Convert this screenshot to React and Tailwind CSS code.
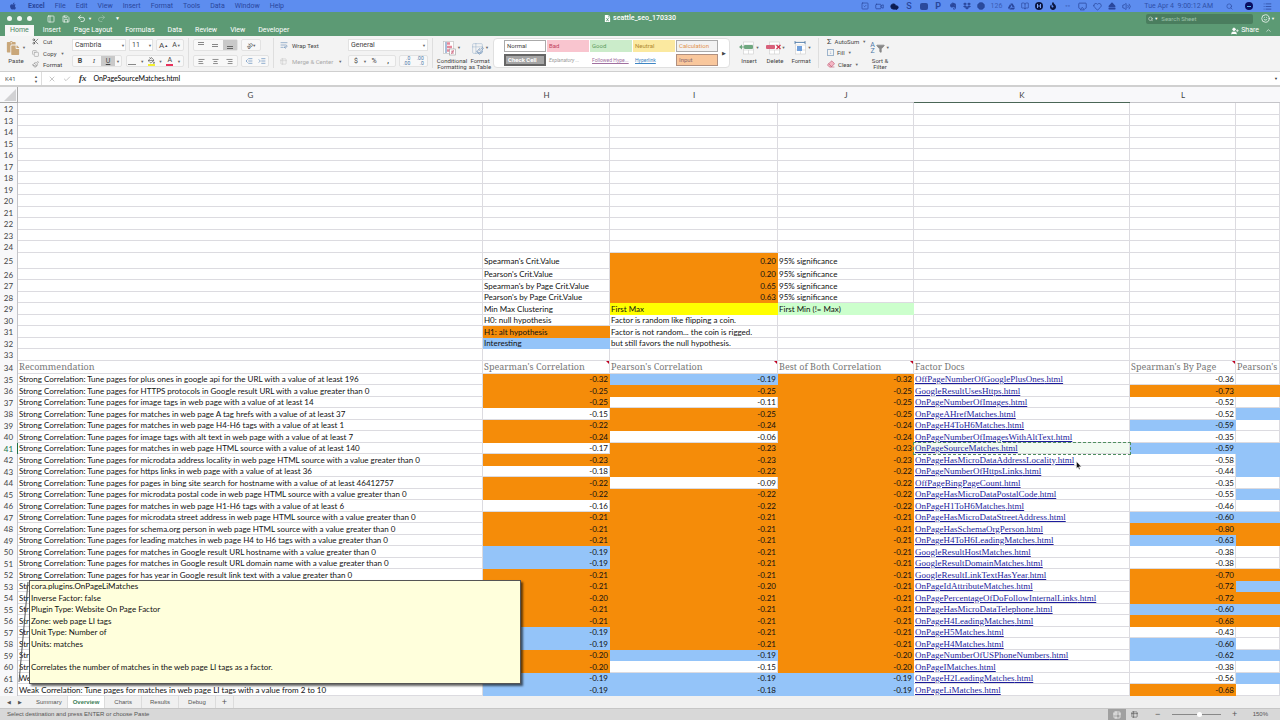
import React from "react";
import {
  AlignCenter,
  AlignLeft,
  AlignRight,
  Airplay,
  BookOpen,
  Check,
  ChevronUp,
  Cloud,
  Copy,
  Eraser,
  Filter,
  Heart,
  IndentDecrease,
  IndentIncrease,
  List,
  Octagon,
  PaintBucket,
  Paintbrush,
  PanelLeft,
  Redo2,
  Save,
  Scissors,
  Search,
  Smile,
  SquareCheck,
  Table2,
  TextWrap,
  Undo2,
  UserPlus,
  Video,
  Volume2,
  X,
} from "lucide-react";
import { FaApple, FaDropbox, FaEject, FaEvernote, FaFire, FaGoogleDrive, FaPaste, FaFileExcel } from "react-icons/fa";

const menus = ["File", "Edit", "View", "Insert", "Format", "Tools", "Data", "Window", "Help"];
const ribbonTabs = ["Insert", "Page Layout", "Formulas", "Data", "Review", "View", "Developer"];

const fills = {
  o: "bg-[#f58c09] border-[#f58c09]",
  b: "bg-[#94c4f9] border-[#94c4f9]",
  y: "bg-[#ffff00] border-[#ffff00]",
  g: "bg-[#ccffcc] border-[#ccffcc]",
  w: "border-[#dcdbe0]",
};

const S = "Strong Correlation: Tune pages for ";

// row number, recommendation, H, I, J, factor doc, L, fills for H I J L M
const rows = [
  [35, S + "plus ones in google api for the URL with a value of at least 196", "-0.32", "-0.19", "-0.32", "OffPageNumberOfGooglePlusOnes", "-0.36", "oboww"],
  [36, S + "HTTPS protocols in Google result URL with a value greater than 0", "-0.25", "-0.25", "-0.25", "GoogleResultUsesHttps", "-0.73", "ooooo"],
  [37, S + "image tags in web page with a value of at least 14", "-0.25", "-0.11", "-0.25", "OnPageNumberOfImages", "-0.52", "owoww"],
  [38, S + "matches in web page A tag hrefs with a value of at least 37", "-0.15", "-0.25", "-0.25", "OnPageAHrefMatches", "-0.52", "woowb"],
  [39, S + "matches in web page H4-H6 tags with a value of at least 1", "-0.22", "-0.24", "-0.24", "OnPageH4ToH6Matches", "-0.59", "ooobw"],
  [40, S + "image tags with alt text in web page with a value of at least 7", "-0.24", "-0.06", "-0.24", "OnPageNumberOfImagesWithAltText", "-0.35", "owoww"],
  [41, S + "matches in web page HTML source with a value of at least 140", "-0.17", "-0.23", "-0.23", "OnPageSourceMatches", "-0.59", "woobb"],
  [42, S + "microdata address locality in web page HTML source with a value greater than 0", "-0.23", "-0.23", "-0.23", "OnPageHasMicroDataAddressLocality", "-0.58", "ooowb"],
  [43, S + "https links in web page with a value of at least 36", "-0.18", "-0.22", "-0.22", "OnPageNumberOfHttpsLinks", "-0.44", "woowb"],
  [44, S + "pages in bing site search for hostname with a value of at least 46412757", "-0.22", "-0.09", "-0.22", "OffPageBingPageCount", "-0.35", "owoww"],
  [45, S + "microdata postal code in web page HTML source with a value greater than 0", "-0.22", "-0.22", "-0.22", "OnPageHasMicroDataPostalCode", "-0.55", "ooowb"],
  [46, S + "matches in web page H1-H6 tags with a value of at least 6", "-0.16", "-0.22", "-0.22", "OnPageH1ToH6Matches", "-0.46", "wooww"],
  [47, S + "microdata street address in web page HTML source with a value greater than 0", "-0.21", "-0.21", "-0.21", "OnPageHasMicroDataStreetAddress", "-0.60", "ooobb"],
  [48, S + "schema.org person in web page HTML source with a value greater than 0", "-0.21", "-0.21", "-0.21", "OnPageHasSchemaOrgPerson", "-0.80", "ooooo"],
  [49, S + "leading matches in web page H4 to H6 tags with a value greater than 0", "-0.21", "-0.21", "-0.21", "OnPageH4ToH6LeadingMatches", "-0.63", "ooobo"],
  [50, S + "matches in Google result URL hostname with a value greater than 0", "-0.19", "-0.21", "-0.21", "GoogleResultHostMatches", "-0.38", "booww"],
  [51, S + "matches in Google result URL domain name with a value greater than 0", "-0.19", "-0.21", "-0.21", "GoogleResultDomainMatches", "-0.38", "booww"],
  [52, S + "has year in Google result link text with a value greater than 0", "-0.21", "-0.21", "-0.21", "GoogleResultLinkTextHasYear", "-0.70", "ooooo"],
  [53, "Str", "-0.21", "-0.20", "-0.21", "OnPageIdAttributeMatches", "-0.72", "oooob"],
  [54, "Str", "-0.20", "-0.21", "-0.21", "OnPagePercentageOfDoFollowInternalLinks", "-0.72", "ooooo"],
  [55, "Str", "-0.21", "-0.21", "-0.21", "OnPageHasMicroDataTelephone", "-0.60", "ooobb"],
  [56, "Str", "-0.21", "-0.21", "-0.21", "OnPageH4LeadingMatches", "-0.68", "ooooo"],
  [57, "Str", "-0.19", "-0.21", "-0.21", "OnPageH5Matches", "-0.43", "booww"],
  [58, "Str", "-0.19", "-0.21", "-0.21", "OnPageH4Matches", "-0.60", "boobw"],
  [59, "Str", "-0.20", "-0.19", "-0.20", "OnPageNumberOfUSPhoneNumbers", "-0.62", "obobb"],
  [60, "Str", "-0.20", "-0.15", "-0.20", "OnPageIMatches", "-0.38", "owoww"],
  [61, "We", "-0.19", "-0.19", "-0.19", "OnPageH2LeadingMatches", "-0.56", "bbbwb"],
  [62, "Weak Correlation: Tune pages for matches in web page LI tags with a value from 2 to 10", "-0.19", "-0.18", "-0.19", "OnPageLiMatches", "-0.68", "bbbow"],
];

// row number, H, I, J, fills for H I J, whether I holds a number
const legend = [
  [25, "Spearman's Crit.Value", "0.20", "95% significance", "wow", true],
  [26, "Pearson's Crit.Value", "0.20", "95% significance", "wow", true],
  [27, "Spearman's by Page Crit.Value", "0.65", "95% significance", "wow", true],
  [28, "Pearson's by Page Crit.Value", "0.63", "95% significance", "wow", true],
  [29, "Min Max Clustering", "First Max", "First Min (!= Max)", "wyg"],
  [30, "H0: null hypothesis", "Factor is random like flipping a coin.", "", "www"],
  [31, "H1: alt hypothesis", "Factor is not random... the coin is rigged.", "", "oww"],
  [32, "Interesting", "but still favors the null hypothesis.", "", "bww"],
  [33, "", "", "", "www"],
];

const Cell = ({ children, fill = "w", right, className = "" }) => (
  <td
    className={`whitespace-nowrap border-r border-b p-0 ${fills[fill]} ${
      right ? "pr-px text-right" : "pl-px"
    } ${className}`}
  >
    {children}
  </td>
);

const RowHead = ({ n }) => (
  <th
    scope="row"
    className={`border-r p-0 text-center font-normal ${
      n === 41 ? "border-[#217346] text-[#217346]" : "border-[#c4c4c8] text-[#444]"
    } bg-[#f8f8fa]`}
  >
    {n}
  </th>
);

const HeadCell = ({ children, note }) => (
  <td className="relative whitespace-nowrap border-r border-b border-[#dcdbe0] p-0 pl-px font-['Noto_Serif','Liberation_Serif',serif] text-[9px] text-[#777]">
    {children}
    {note && (
      <svg className="absolute top-0 right-0" width="3" height="3" viewBox="0 0 3 3">
        <path d="M0 0h3v3z" fill="#c00020" />
      </svg>
    )}
  </td>
);

const Caret = () => <span className="text-[4px] text-[#666]">▼</span>;

const Divider = () => <div className="mx-1 w-px self-stretch bg-[#dedede]" />;

const SmallBtn = ({ children, on, label }) => (
  <button
    aria-label={label}
    className={`flex h-full flex-1 items-center justify-center ${on ? "bg-[#c9c9c9]" : ""}`}
  >
    {children}
  </button>
);

const BtnGroup = ({ children, className }) => (
  <div className={`flex h-3 items-center rounded-xs border border-[#e2e2e2] bg-[#f8f8f8] text-[7px] ${className}`}>{children}</div>
);

const BigBtn = ({ icon, children, className }) => (
  <button className={`flex flex-col items-center justify-start text-center leading-[6px] ${className}`}>
    <span className="flex h-5 shrink-0 items-center gap-px">
      {icon}
      <Caret />
    </span>
    <span>{children}</span>
  </button>
);

// sheet cells glyph, tinted per command
const CellsIcon = ({ tint, kind }) => (
  <svg width="16" height="14" viewBox="0 0 16 14" fill="none">
    <rect x="4.500" y="1" width="10" height="12" fill="#fff" stroke="#ccc" strokeWidth=".6" />
    <path d="M4.500 4h10M4.500 9h10M9.500 9v4" stroke="#ccc" strokeWidth=".6" />
    {kind === "format" ? (
      <>
        <path d="M4 1.500h10M4 0v3M14 0v3" stroke="#4b78a8" strokeWidth=".8" />
        <rect x="6" y="5" width="5" height="5" fill={tint} />
      </>
    ) : (
      <rect x={kind === "delete" ? "1" : "5"} y="4" width="9" height="4" rx="1" fill={tint} />
    )}
    {kind === "insert" && <path d="M0 6l3-2.500v2h3v1H3v2z" fill={tint} />}
    {kind === "delete" && <path d="M11.500 4l4 4M15.500 4l-4 4" stroke="#d22f4d" strokeWidth="1.200" />}
  </svg>
);

const CondIcon = () => (
  <svg width="13" height="15" viewBox="0 0 13 15" fill="none">
    <rect x=".5" y=".5" width="10" height="12" fill="#fff" stroke="#bbb" strokeWidth=".6" />
    <path d="M3 1v11" stroke="#8aa9cc" strokeWidth="1.500" />
    <path d="M4 2.500h3M4 6h5M4 9.500h3" stroke="#e58a9c" strokeWidth="2.500" />
    <rect x="6.500" y="8" width="6" height="6" fill="#fff" stroke="#999" strokeWidth=".6" />
    <path d="M8 10.200h3M8 12h3M10.500 9l-2 4" stroke="#c04060" strokeWidth=".6" />
  </svg>
);

const DecimalIcon = ({ top, bottom }) => (
  <span className="text-right text-[5px] leading-[5px] text-[#4b78a8]">
    {top}
    <br />
    {bottom}
  </span>
);

const MenuBar = () => (
  <header className="flex h-3 items-center justify-between bg-[#5d8def] px-2 text-[#2a479c]">
    <nav className="flex items-center gap-[10px] pl-px">
      <FaApple size={8} className="mr-px" />
      <button className="font-bold">Excel</button>
      {menus.map((m) => (
        <button key={m}>{m}</button>
      ))}
    </nav>
    <div className="flex items-center">
      <div className="flex items-center gap-[6px]">
        <SquareCheck size={8} />
        <Video size={9} />
        <Cloud size={9} className="fill-[#0c1c50] text-[#0c1c50]" />
        <b className="w-[9px] text-center text-[9px] font-medium">S</b>
        <span className="h-[7px] w-[8px] rounded-xs bg-[#2b4a9c]" />
        <b className="w-[9px] text-center text-[9px]">P</b>
        <FaEvernote size={8} />
        <FaDropbox size={8} />
        <Octagon size={8} className="fill-[#2b4a9c]" />
        <span className="text-[#3b5cb4]">126</span>
        <FaGoogleDrive size={7} />
        <BookOpen size={8} />
        <svg width="8" height="8" viewBox="0 0 8 8">
          <circle cx="4" cy="4" r="4" fill="#0b1640" />
          <path d="M2.500 2v4M5.500 2v4M2.500 4h3" stroke="#7da2f5" strokeWidth="1" />
        </svg>
        <FaFire size={8} className="text-[#0b1640]" />
        <span className="w-[9px] text-center">◦◦</span>
        <Airplay size={9} />
        <Heart size={9} />
        <FaEject size={8} />
        <Volume2 size={9} />
      </div>
      <span className="ml-[13px] text-[#2f50a8]">Tue Apr 4&nbsp; 9:00:12 AM</span>
      <Search size={7} className="ml-[13px]" />
      <span className="ml-3 flex size-2 items-center justify-center rounded-full bg-[#0a0e60]">
        <span className="h-px w-1 bg-[#4bb6e8]" />
      </span>
      <List size={9} className="ml-[10px]" />
    </div>
  </header>
);

const TitleBar = () => (
  <div className="bg-[#5c9a74] text-white">
    <div className="grid h-[13px] grid-cols-3 items-center">
      <div className="flex items-center gap-[5px] pl-[7px]">
        {["Close", "Minimize", "Zoom"].map((w) => (
          <button key={w} aria-label={w} className="size-[5px] rounded-full bg-[#f0f6f2]" />
        ))}
        <button aria-label="Toggle sidebar" className="ml-[10px]"><PanelLeft size={8} /></button>
        <button aria-label="Save" className="ml-[2px]"><Save size={8} /></button>
        <button aria-label="Undo" className="ml-[2px] flex items-center gap-[2px]">
          <Undo2 size={9} /> <span className="text-[4px]">▼</span>
        </button>
        <button aria-label="Redo" className="opacity-40"><Redo2 size={9} /></button>
        <button aria-label="Customize toolbar" className="ml-1 text-[5px]">▼</button>
      </div>
      <h1 className="flex items-center justify-center gap-[2px] font-medium">
        <FaFileExcel size={7} /> seattle_seo_170330
      </h1>
      <div className="flex items-center justify-end gap-2 pr-[5px]">
        <label className="flex h-[10px] w-[107px] items-center gap-px rounded-xs bg-[#4a7d5e] pl-[2px]">
          <Search size={6} />
          <span className="text-[4px]">▼</span>
          <input
            aria-label="Search Sheet"
            placeholder="Search Sheet"
            className="w-full min-w-0 bg-transparent pl-[2px] text-[6px] outline-none placeholder:text-[#9cc2aa]"
          />
        </label>
        <button aria-label="Feedback" className="flex items-center gap-px">
          <Smile size={9} /> <span className="text-[4px]">▼</span>
        </button>
      </div>
    </div>
    <div className="flex h-[11px] items-center justify-between pr-2 pl-[5px]">
      <div className="flex h-full items-center gap-[13px]">
        <button className="-mr-[4px] h-full bg-[#f6f6f6] px-[5px] text-[#4d8663]">Home</button>
        {ribbonTabs.map((t) => (
          <button key={t}>{t}</button>
        ))}
      </div>
      <div className="flex items-center gap-[6px]">
        <button className="flex items-center gap-[2px]">
          <UserPlus size={8} className="fill-white" /> Share
        </button>
        <button aria-label="Collapse ribbon"><ChevronUp size={7} /></button>
      </div>
    </div>
  </div>
);

const stylesList = [
  ["Normal", "border border-[#aaa] bg-white text-[6px] text-[#444]"],
  ["Bad", "bg-[#f9c5cf] text-[6px] text-[#c0405c]"],
  ["Good", "bg-[#cbecca] text-[6px] text-[#5c9a5c]"],
  ["Neutral", "bg-[#fbe9a0] text-[6px] text-[#b08a30]"],
  ["Calculation", "border border-[#aaa] bg-[#f2f2f2] text-[6px] text-[#e2924e]"],
  ["Check Cell", "border-2 border-double border-[#666] bg-[#a5a5a5] text-[6px] text-white font-bold"],
  ["Explanatory ...", "text-[5px] text-[#999] italic"],
  ["Followed Hype...", "text-[5px] text-[#a070a0] underline"],
  ["Hyperlink", "text-[5px] text-[#3f86c4] underline"],
  ["Input", "border border-[#b09080] bg-[#f9c79c] text-[6px] text-[#8a6a70]"],
];

const Ribbon = () => (
  <div className="flex h-9 border-b border-[#cfcfcf] bg-[#f3f3f3] pt-[2px] pb-[3px] text-[6px] leading-[7px] whitespace-nowrap text-[#444]">
    <button className="ml-[5px] flex w-[22px] flex-col items-center justify-start">
      <span className="flex h-[19px] items-center gap-[2px]">
        <FaPaste size={14} className="text-[#c9a77a]" />
        <Caret />
      </span>
      <span>Paste</span>
    </button>
    <div className="ml-[5px] flex w-[34px] flex-col justify-between">
      <button className="flex items-center gap-1"><Scissors size={7} /> Cut</button>
      <button className="flex items-center gap-1"><Copy size={7} className="text-[#999]" /> Copy <Caret /></button>
      <button className="flex items-center gap-1"><Paintbrush size={7} className="text-[#888]" /> Format</button>
    </div>
    <div className="ml-[6px] flex w-[112px] flex-col justify-between py-px">
      <div className="flex justify-between">
        <div className="flex w-[54px] items-center border border-[#e2e2e2] bg-white">
          <select aria-label="Font" className="h-[10px] w-full px-[2px] text-[7px]">
            <option>Cambria</option>
          </select>
          <Caret />
        </div>
        <div className="flex w-[24px] items-center border border-[#e2e2e2] bg-white">
          <select aria-label="Font size" className="h-[10px] w-full px-[2px] text-[7px]">
            <option>11</option>
          </select>
          <Caret />
        </div>
        <BtnGroup className="w-7">
          <SmallBtn label="Grow font"><span className="text-[8px]">A</span><span className="text-[4px]">▲</span></SmallBtn>
          <SmallBtn label="Shrink font">A<Caret /></SmallBtn>
        </BtnGroup>
      </div>
      <div className="flex justify-between">
        <BtnGroup className="w-[50px]">
          <SmallBtn label="Bold"><b>B</b></SmallBtn>
          <SmallBtn label="Italic"><i className="font-serif">I</i></SmallBtn>
          <SmallBtn on label="Underline"><u>U</u></SmallBtn>
          <span className="px-px"><Caret /></span>
        </BtnGroup>
        <BtnGroup className="w-[58px]">
          <SmallBtn label="Borders"><span className="mr-1 mt-[6px] h-px w-2 bg-[#888]" /><Caret /></SmallBtn>
          <SmallBtn label="Fill color">
            <span className="mr-1 border-b-2 border-[#f2ee30]"><PaintBucket size={7} /></span><Caret />
          </SmallBtn>
          <SmallBtn label="Font color">
            <span className="mr-1 border-b-2 border-[#e8305c] px-px leading-[7px]">A</span><Caret />
          </SmallBtn>
        </BtnGroup>
      </div>
    </div>
    <Divider />
    <div className="flex w-[76px] flex-col justify-between py-px">
      <div className="flex justify-between">
        <BtnGroup className="w-[45px]">
          <SmallBtn label="Top align"><span className="mb-1 h-[3px] w-[6px] border-y border-[#888]" /></SmallBtn>
          <SmallBtn label="Middle align"><span className="h-[3px] w-[6px] border-y border-[#888]" /></SmallBtn>
          <SmallBtn on label="Bottom align"><span className="mt-1 h-[3px] w-[6px] border-y border-[#666]" /></SmallBtn>
        </BtnGroup>
        <BtnGroup className="mr-[8px] w-5">
          <SmallBtn label="Orientation"><span className="-rotate-45 text-[6px]">ab</span><Caret /></SmallBtn>
        </BtnGroup>
      </div>
      <div className="flex justify-between">
        <BtnGroup className="w-[45px]">
          <SmallBtn label="Align left"><AlignLeft size={7} /></SmallBtn>
          <SmallBtn label="Center"><AlignCenter size={7} /></SmallBtn>
          <SmallBtn label="Align right"><AlignRight size={7} /></SmallBtn>
        </BtnGroup>
        <BtnGroup className="w-[28px]">
          <SmallBtn label="Decrease indent"><IndentDecrease size={8} className="text-[#5b86b8]" /></SmallBtn>
          <SmallBtn label="Increase indent"><IndentIncrease size={8} className="text-[#5b86b8]" /></SmallBtn>
        </BtnGroup>
      </div>
    </div>
    <Divider />
    <div className="ml-[2px] flex w-[64px] flex-col justify-between py-[3px]">
      <button className="flex items-center gap-1"><TextWrap size={8} className="text-[#6c8fb8]" /> Wrap Text</button>
      <button className="flex items-center gap-[5px] text-[#aaa]"><Table2 size={7} className="text-[#ccc]" /> Merge &amp; Center <Caret /></button>
    </div>
    <div className="ml-1 flex w-[80px] flex-col justify-between py-px">
      <div className="flex items-center border border-[#e2e2e2] bg-white pr-px">
        <select aria-label="Number format" className="h-[10px] w-full px-[2px] text-[7px]">
          <option>General</option>
        </select>
        <Caret />
      </div>
      <div className="flex justify-between">
        <BtnGroup className="w-[48px]">
          <SmallBtn label="Currency">$</SmallBtn>
          <Caret />
          <SmallBtn label="Percent">%</SmallBtn>
          <SmallBtn label="Comma"><b>,</b></SmallBtn>
        </BtnGroup>
        <BtnGroup className="w-[29px]">
          <SmallBtn label="Increase decimal"><DecimalIcon top=".0" bottom=".00" /></SmallBtn>
          <SmallBtn label="Decrease decimal"><DecimalIcon top=".00" bottom=".0" /></SmallBtn>
        </BtnGroup>
      </div>
    </div>
    <Divider />
    <BigBtn className="w-[30px]" icon={<CondIcon />}>Conditional<br />Formatting</BigBtn>
    <BigBtn
      className="w-[26px]"
      icon={
        <span className="relative">
          <Table2 size={13} className="text-[#9db4cc]" strokeWidth={1} />
          <Paintbrush size={8} className="absolute right-0 bottom-0 text-[#6c8fb8]" />
        </span>
      }
    >
      Format<br />as Table
    </BigBtn>
    <div className="flex w-[237px] items-center justify-between rounded-sm border border-[#e0e0e0] bg-white pr-[3px] pl-[10px]">
      <div className="grid grid-cols-5 gap-x-px gap-y-[2px]">
        {stylesList.map(([name, cls]) => (
          <button key={name} className={`h-3 w-[42px] px-[2px] text-left leading-[8px] ${cls}`}>
            {name}
          </button>
        ))}
      </div>
      <button aria-label="More styles" className="text-[5px]">▶</button>
    </div>
    <div className="ml-[6px] flex">
      <BigBtn className="w-[26px]" icon={<CellsIcon kind="insert" tint="#6fa77f" />}>Insert</BigBtn>
      <BigBtn className="w-[26px]" icon={<CellsIcon kind="delete" tint="#d8607a" />}>Delete</BigBtn>
      <BigBtn className="w-[26px]" icon={<CellsIcon kind="format" tint="#6f9fdc" />}>Format</BigBtn>
    </div>
    <Divider />
    <div className="flex w-[42px] flex-col justify-between pl-1">
      <button className="flex items-center gap-[3px]"><span className="text-[8px]">Σ</span> AutoSum <Caret /></button>
      <button className="flex items-center gap-[3px]">
        <span className="flex size-[7px] items-center justify-center border border-[#9db4cc] text-[5px] text-[#4b78a8]">↓</span> Fill <Caret />
      </button>
      <button className="flex items-center gap-[3px]"><Eraser size={8} className="fill-[#f3b6c4] text-[#c2607a]" /> Clear <Caret /></button>
    </div>
    <BigBtn
      className="ml-1 w-[22px]"
      icon={
        <>
          <span className="text-[7px] leading-[6px] text-[#4b78a8]">A<br />Z</span>
          <Filter size={9} className="fill-[#888] text-[#888]" />
        </>
      }
    >
      Sort &amp;<br />Filter
    </BigBtn>
  </div>
);

const FormulaBar = () => (
  <div className="flex h-[15px] items-center border-b-2 border-[#d0d0d0] bg-white text-[#333]">
    <input aria-label="Name box" defaultValue="K41" className="w-[34px] pl-[5px] text-[6px] text-[#555]" />
    <span className="flex flex-col text-center text-[4px] leading-[5px] text-[#555]">
      <span>▲</span>
      <span>▼</span>
    </span>
    <span className="ml-[3px] h-full w-px bg-[#ddd]" />
    <button aria-label="Cancel" className="ml-[6px] text-[#aaa]"><X size={8} /></button>
    <button aria-label="Enter" className="ml-[7px] text-[#aaa]"><Check size={8} /></button>
    <i className="ml-2 font-['Liberation_Serif',serif] text-[9px] font-bold">fx</i>
    <input
      aria-label="Formula"
      defaultValue="OnPageSourceMatches.html"
      className="ml-[7px] min-w-0 flex-1 font-['Lato',sans-serif] text-[7px] text-black"
    />
    <button aria-label="Expand formula bar" className="pr-[2px] text-[4px]">▼</button>
  </div>
);

const Sheet = () => (
  <main className="relative overflow-hidden bg-white font-['Lato',sans-serif] text-[8px] leading-[10px] text-[#111]">
    <table className="w-full table-fixed border-separate border-spacing-0">
      <colgroup>
        <col className="w-[18px]" />
        <col />
        <col className="w-[127px]" />
        <col className="w-[168px]" />
        <col className="w-[136px]" />
        <col className="w-[216px]" />
        <col className="w-[106px]" />
        <col className="w-11" />
      </colgroup>
      <thead>
        <tr className="h-4 bg-[#f8f8fa] text-[#444]">
          <th className="border-r border-b border-[#a9a9a9] p-0">
            <svg className="ml-1" width="12" height="12" viewBox="0 0 12 12">
              <path d="M12 0v12H0z" fill="#d2d2d4" />
            </svg>
          </th>
          {["G", "H", "I", "J", "K", "L", ""].map((c) => (
            <th
              key={c}
              scope="col"
              className={`border-b p-0 font-normal ${c === "K" ? "border-[#4a6656]" : "border-[#c4c4c8]"}`}
            >
              {c}
            </th>
          ))}
        </tr>
      </thead>
      <tbody>
        {[12, 13, 14, 15, 16, 17, 18, 19, 20, 21, 22, 23, 24].map((n) => (
          <tr key={n} className={n % 2 ? "h-[11px]" : "h-3"}>
            <RowHead n={n} />
            <Cell /><Cell /><Cell /><Cell /><Cell /><Cell /><Cell />
          </tr>
        ))}
        {legend.map(([n, h, i, j, f, num]) => (
          <tr key={n} className={n === 25 ? "h-4" : n % 2 ? "h-3" : "h-[11px]"}>
            <RowHead n={n} />
            <Cell />
            <Cell fill={f[0]}>{h}</Cell>
            <Cell fill={f[1]} right={num}>{i}</Cell>
            <Cell fill={f[2]}>{j}</Cell>
            <Cell /><Cell /><Cell />
          </tr>
        ))}
        <tr className="h-[13px]">
          <RowHead n={34} />
          <HeadCell>Recommendation</HeadCell>
          <HeadCell note>Spearman's Correlation</HeadCell>
          <HeadCell note>Pearson's Correlation</HeadCell>
          <HeadCell note>Best of Both Correlation</HeadCell>
          <HeadCell>Factor Docs</HeadCell>
          <HeadCell note>Spearman's By Page</HeadCell>
          <HeadCell>Pearson's</HeadCell>
        </tr>
        {rows.map(([n, rec, h, i, j, doc, l, f]) => (
          <tr key={n} className={n % 2 ? "h-[11px]" : "h-3"}>
            <RowHead n={n} />
            <Cell>{rec}</Cell>
            <Cell fill={f[0]} right>{h}</Cell>
            <Cell fill={f[1]} right>{i}</Cell>
            <Cell fill={f[2]} right>{j}</Cell>
            <Cell
              className={`font-['Liberation_Serif',serif] text-[9px] ${
                n === 41 ? "bg-[#f1faf1] outline outline-dashed outline-[#4f8f5f]" : ""
              }`}
            >
              <a href={`#${doc}`} className="text-[#1c1c9c] underline">{doc}.html</a>
            </Cell>
            <Cell fill={f[3]} right>{l}</Cell>
            <Cell fill={f[4]} />
          </tr>
        ))}
      </tbody>
    </table>

    {/* comment attached to row 61 */}
    <svg className="absolute bottom-3 left-[18px]" width="12" height="104" viewBox="0 0 12 104">
      <path d="M10 2L1 102" stroke="#555" strokeWidth="1" />
    </svg>
    <div className="absolute bottom-3 left-[29px] h-[104px] w-[492px] border border-[#555] bg-[#ffffdc] pl-px leading-[11px] shadow-[2px_2px_2px_rgba(0,0,0,0.6)]">
      <p className="h-3">cora.plugins.OnPageLiMatches</p>
      <p>Inverse Factor: false</p>
      <p className="h-3">Plugin Type: Website On Page Factor</p>
      <p>Zone: web page LI tags</p>
      <p className="h-3">Unit Type: Number of</p>
      <p className="mb-3">Units: matches</p>
      <p>Correlates the number of matches in the web page LI tags as a factor.</p>
    </div>

    <svg className="absolute top-[374px] left-[1076px]" width="6" height="9" viewBox="0 0 6 9">
      <path d="M.5.5v7l1.600-1.500 1 2.500 1-.4-1-2.400h2.200z" fill="#111" stroke="#fff" strokeWidth=".4" />
    </svg>
  </main>
);

const sheetTabs = [
  ["Summary", "px-[5px]"],
  ["Overview", "bg-white px-[5px] font-bold text-[#3c8058]"],
  ["Charts", "px-[9px]"],
  ["Results", "px-[8px]"],
  ["Debug", "px-[9px]"],
];

const Bottom = () => (
  <footer className="font-['Liberation_Sans',sans-serif] text-[6px] text-[#555]">
    <div className="flex h-[13px] items-stretch border-b border-[#c6c6c6] bg-[#f0f0f0]">
      <button aria-label="Previous sheet" className="ml-[7px] text-[5px]">◀</button>
      <button aria-label="Next sheet" className="ml-[7px] text-[5px]">▶</button>
      <div className="ml-[9px] flex">
        {sheetTabs.map(([t, cls]) => (
          <button key={t} className={`border-r border-[#dcdcdc] ${cls}`}>
            {t}
          </button>
        ))}
        <button aria-label="Add sheet" className="border-r border-[#dcdcdc] px-[6px] text-[9px]">+</button>
      </div>
    </div>
    <div className="flex h-[11px] items-center justify-between bg-[#d8d8d8] pr-3 pl-[7px]">
      <span>Select destination and press ENTER or choose Paste</span>
      <div className="flex items-center">
        <button aria-label="Normal view" className="flex h-[11px] w-[18px] items-center justify-center bg-[#a0a0a0] text-white">
          <Table2 size={8} />
        </button>
        <button aria-label="Page layout view" className="flex w-[18px] justify-center"><Table2 size={7} /></button>
        <button aria-label="Zoom out" className="w-7 text-[9px]">−</button>
        <input
          type="range"
          aria-label="Zoom"
          defaultValue="58"
          className="h-px w-[49px] appearance-none bg-[#888] [&::-webkit-slider-thumb]:size-[5px] [&::-webkit-slider-thumb]:appearance-none [&::-webkit-slider-thumb]:rounded-full [&::-webkit-slider-thumb]:bg-white"
        />
        <button aria-label="Zoom in" className="w-7 text-[9px]">+</button>
        <span className="ml-1">150%</span>
      </div>
    </div>
  </footer>
);

export default function App() {
  return (
    <div className="min-h-screen overflow-hidden bg-[#d8d8d8] font-['Roboto','Liberation_Sans',sans-serif] text-[7px] leading-[9px] [&_select]:appearance-none">
      <MenuBar />
      <TitleBar />
      <Ribbon />
      <FormulaBar />
      <Sheet />
      <Bottom />
    </div>
  );
}
